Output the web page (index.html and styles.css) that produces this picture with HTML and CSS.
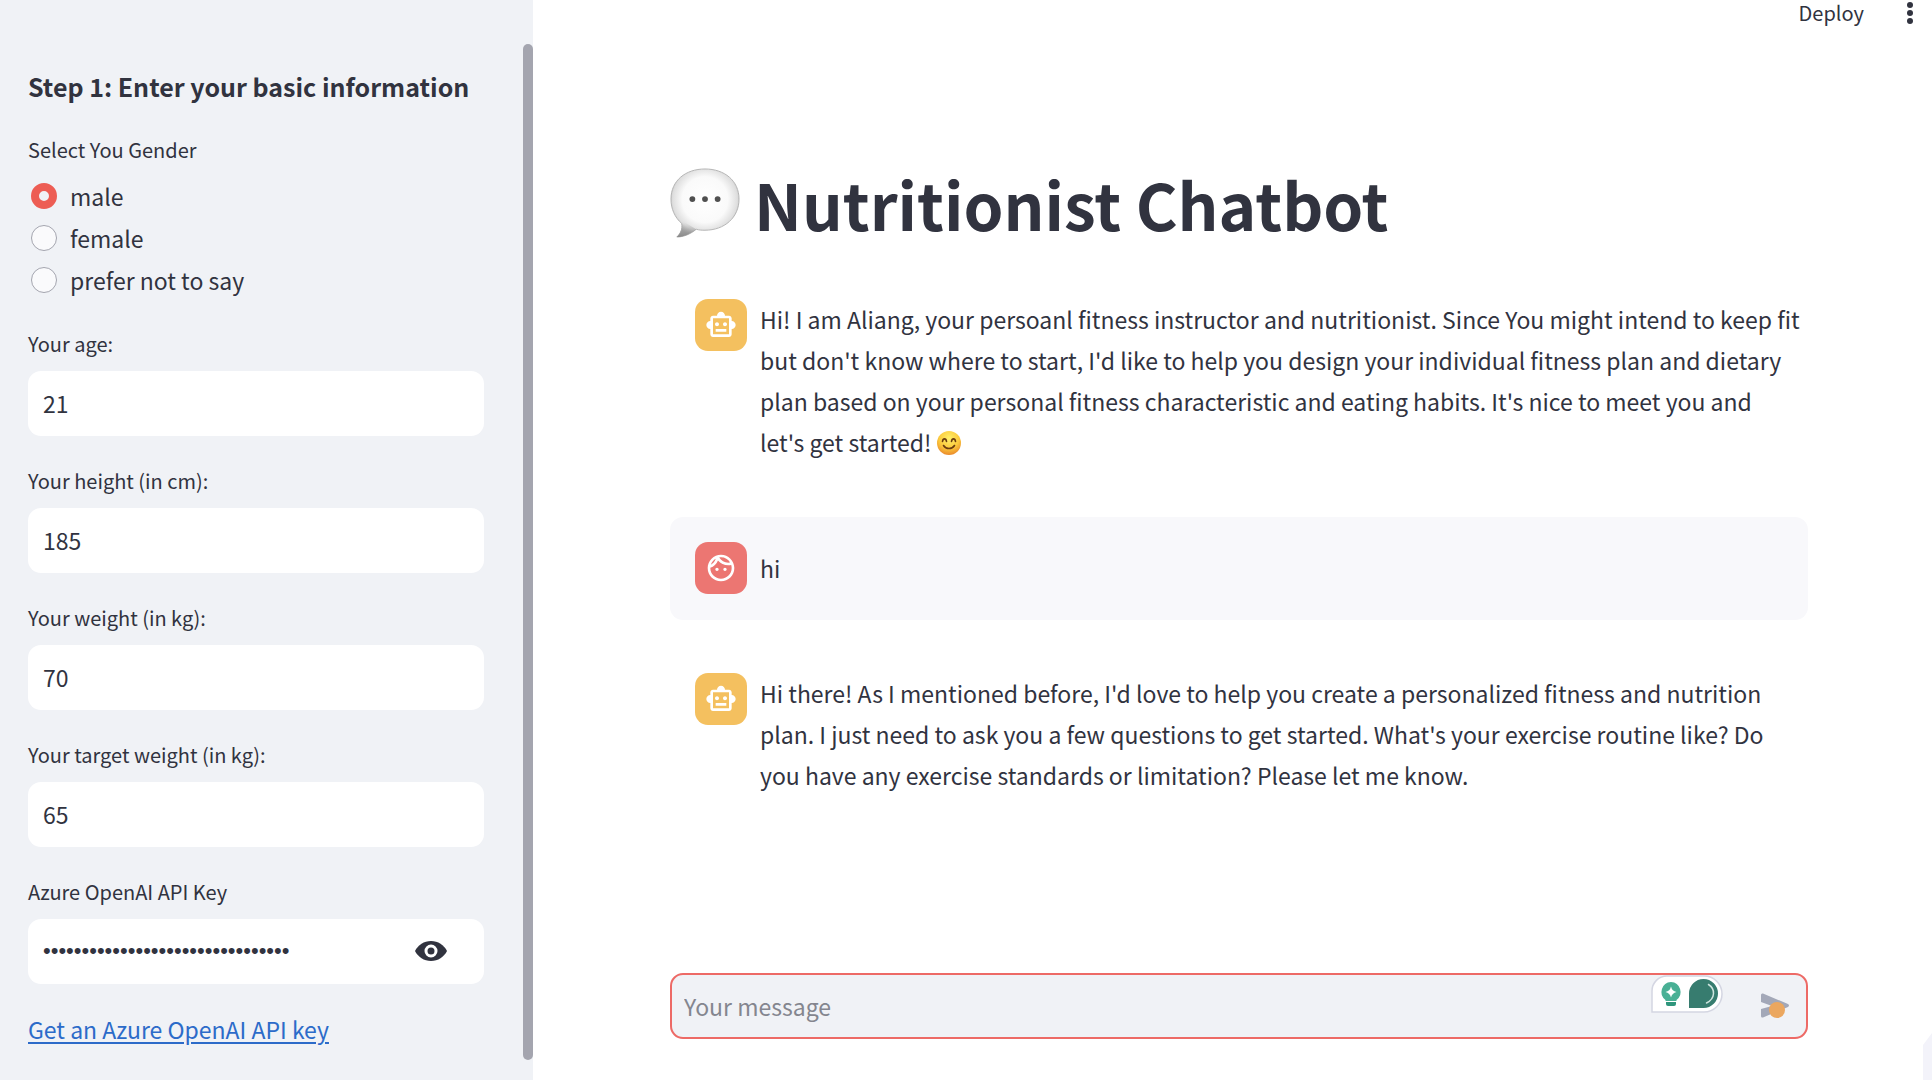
FILE: index.html
```html
<!DOCTYPE html>
<html lang="en">
<head>
<meta charset="utf-8">
<title>Nutritionist Chatbot</title>
<link rel="stylesheet" href="styles.css">
</head>
<body>
<svg class="defs" aria-hidden="true">
  <symbol id="robot" viewBox="0 0 24 24"><path d="M20 9V7c0-1.1-.9-2-2-2h-3c0-1.66-1.34-3-3-3S9 3.34 9 5H6c-1.1 0-2 .9-2 2v2c-1.66 0-3 1.34-3 3s1.34 3 3 3v4c0 1.1.9 2 2 2h12c1.1 0 2-.9 2-2v-4c1.66 0 3-1.34 3-3s-1.34-3-3-3zm-2 10H6V7h12v12zm-9-6c-.83 0-1.5-.67-1.5-1.5S8.17 10 9 10s1.5.67 1.5 1.5S9.83 13 9 13zm7.5-1.5c0 .83-.67 1.5-1.5 1.5s-1.5-.67-1.5-1.5.67-1.5 1.5-1.5 1.5.67 1.5 1.5zM8 15h8v2H8v-2z"/></symbol>
  <symbol id="face" viewBox="0 0 24 24"><path d="M10.25 13c0 .69-.56 1.25-1.25 1.25S7.75 13.69 7.75 13s.56-1.25 1.25-1.25 1.25.56 1.25 1.25zM15 11.75c-.69 0-1.25.56-1.25 1.25s.56 1.25 1.25 1.25 1.25-.56 1.25-1.25-.56-1.25-1.25-1.25zm7 .25c0 5.52-4.48 10-10 10S2 17.52 2 12 6.48 2 12 2s10 4.48 10 10zM10.66 4.12C12.06 6.44 14.6 8 17.5 8c.46 0 .91-.05 1.34-.12C17.44 5.56 14.9 4 12 4c-.46 0-.91.05-1.34.12zM4.42 9.47c1.71-.97 3.03-2.55 3.66-4.44C6.37 6 5.05 7.58 4.42 9.47zM20 12c0-.78-.12-1.53-.33-2.24-.7.15-1.42.24-2.17.24-3.13 0-5.92-1.44-7.76-3.69C8.69 8.87 6.6 10.88 4 11.86c.01.04 0 .09 0 .14 0 4.41 3.59 8 8 8s8-3.59 8-8z"/></symbol>
</svg>
<div class="app">
  <aside class="sidebar">
    <form class="profile">
      <h2 class="step">Step 1: Enter your basic information</h2>
      <fieldset class="gender">
        <legend class="label">Select You Gender</legend>
        <label class="option"><input type="radio" name="gender" checked>male</label>
        <label class="option"><input type="radio" name="gender">female</label>
        <label class="option"><input type="radio" name="gender">prefer not to say</label>
      </fieldset>
      <div class="field">
        <label class="label" for="age">Your age:</label>
        <input class="box" id="age" type="text" inputmode="numeric" value="21">
      </div>
      <div class="field">
        <label class="label" for="height">Your height (in cm):</label>
        <input class="box" id="height" type="text" inputmode="numeric" value="185">
      </div>
      <div class="field">
        <label class="label" for="weight">Your weight (in kg):</label>
        <input class="box" id="weight" type="text" inputmode="numeric" value="70">
      </div>
      <div class="field">
        <label class="label" for="target">Your target weight (in kg):</label>
        <input class="box" id="target" type="text" inputmode="numeric" value="65">
      </div>
      <div class="field">
        <label class="label" for="key">Azure OpenAI API Key</label>
        <div class="box secret">
          <input class="secret-input" id="key" type="password" value="0123456789abcdef0123456789abcdef">
          <button class="reveal" type="button" aria-label="Show password">
            <svg viewBox="0 0 32 20" width="32" height="20"><path fill="#31333f" d="M0 10C3 4 9 0 16 0s13 4 16 10c-3 6-9 10-16 10S3 16 0 10z"/><circle cx="16" cy="10" r="5" fill="#31333f" stroke="#fff" stroke-width="3"/></svg>
          </button>
        </div>
      </div>
      <a class="key-link" href="#">Get an Azure OpenAI API key</a>
    </form>
    <div class="scrollbar"></div>
  </aside>

  <main class="main">
    <header class="toolbar">
      <button class="deploy" type="button">Deploy</button>
      <button class="menu" type="button" aria-label="Menu">
        <svg viewBox="0 0 6 24" width="6" height="24" fill="#31333f"><circle cx="3" cy="4" r="3"/><circle cx="3" cy="12" r="3"/><circle cx="3" cy="20" r="3"/></svg>
      </button>
    </header>

    <h1 class="title">
      <svg class="bubble" viewBox="0 0 72 72" width="70" height="70" role="img" aria-label="Speech balloon">
        <defs>
          <radialGradient id="shade" cx=".5" cy=".45" r=".56"><stop offset="0" stop-color="#fff"/><stop offset=".6" stop-color="#fafafa"/><stop offset=".85" stop-color="#dedede"/><stop offset="1" stop-color="#a8a8a8"/></radialGradient>
          <linearGradient id="tail" x1="0" y1="0" x2="0" y2="1"><stop offset=".1" stop-color="#aaa" stop-opacity="0"/><stop offset="1" stop-color="#888"/></linearGradient>
        </defs>
        <path fill="url(#shade)" stroke="#b4b4b4" d="M36 1C56 1 71 13 71 32S56 64 36 64c-3 0-6 0-9-1-6 5-13 8-20 8 4-4 6-8 5-14C5 51 1 42 1 32 1 13 16 1 36 1z"/>
        <path fill="url(#tail)" d="M12 54l15 9c-6 5-13 8-20 8 4-4 6-9 5-17z"/>
        <g fill="#505050"><circle cx="23" cy="32" r="3"/><circle cx="36" cy="32" r="3"/><circle cx="49" cy="32" r="3"/></g>
      </svg>
      Nutritionist Chatbot
    </h1>

    <section class="chat">
      <article class="message">
        <span class="avatar bot"><svg width="32" height="32"><use href="#robot"/></svg></span>
        <p class="text">Hi! I am Aliang, your persoanl fitness instructor and nutritionist. Since You might intend to keep fit but don't know where to start, I'd like to help you design your individual fitness plan and dietary plan based on your personal fitness characteristic and eating habits. It's nice to meet you and let's&nbsp;get started!
          <svg class="smile" viewBox="0 0 24 24" width="24" height="24" role="img" aria-label="Smiling face">
            <defs><radialGradient id="skin" cx=".5" cy=".3" r=".7"><stop offset="0" stop-color="#fff06a"/><stop offset=".6" stop-color="#fbc93c"/><stop offset="1" stop-color="#ea8a2c"/></radialGradient></defs>
            <circle cx="12" cy="12" r="12" fill="url(#skin)"/>
            <g fill="none" stroke="#6b3c10" stroke-width="1.6" stroke-linecap="round"><path d="M5.500 10.500c.5-3.500 3.500-3.500 4 0M14.500 10.500c.5-3.500 3.500-3.500 4 0M6.500 14.500c2.500 4 8.500 4 11 0"/></g>
          </svg></p>
      </article>
      <article class="message from-user">
        <span class="avatar user"><svg width="32" height="32"><use href="#face"/></svg></span>
        <p class="text">hi</p>
      </article>
      <article class="message">
        <span class="avatar bot"><svg width="32" height="32"><use href="#robot"/></svg></span>
        <p class="text">Hi there! As I mentioned before, I'd love to help you create a personalized fitness and nutrition plan. I just need to ask you a few questions to get started. What's your exercise routine like? Do you have any exercise standards or limitation? Please let me know.</p>
      </article>
    </section>

    <form class="composer">
      <input class="composer-input" type="text" placeholder="Your message" aria-label="Your message">
      <div class="assistant">
        <svg viewBox="0 0 72 38" width="72" height="38" aria-hidden="true">
          <path fill="#fff" stroke="#d4d6e2" stroke-width="1.500" d="M1 37V16A15 15 0 0 1 16 1h37a18 18 0 0 1 0 36z"/>
          <path fill="#49b095" d="M20 7a10 10 0 0 1 5.500 18v1h-11v-1A10 10 0 0 1 20 7z"/>
          <path fill="#2f957c" d="M15 27h10v2q0 2-2 2h-6q-2 0-2-2z"/>
          <path fill="#fff" d="M20 11.500q1 4.500 5.500 5.500-4.500 1-5.500 5.500-1-4.500-5.500-5.500 4.500-1 5.500-5.500z"/>
          <path fill="#377c6f" d="M38 33V18.500A14.500 14.500 0 1 1 52.500 33z"/>
          <path fill="none" stroke="#cfe5df" stroke-width="1.500" stroke-linecap="round" d="M57.500 9.500c7 4.500 7 14-2 18.500"/>
        </svg>
      </div>
      <button class="send" type="submit" aria-label="Send">
        <svg viewBox="0 0 28 26" width="28" height="26"><path fill="#a3a8b8" d="M0 2Q0 0 2 .5L27 11q2 1.500 0 3L2 24.500Q0 25 0 23v-7l11-3L0 9z"/><circle cx="16" cy="17" r="8" fill="#eba75f"/></svg>
      </button>
    </form>
    <div class="corner"></div>
  </main>
</div>
</body>
</html>
```
FILE: styles.css
```css
* { box-sizing: border-box; }

body {
  margin: 0;
  background: #fff;
  color: #31333f;
  font-family: "Noto Sans CJK SC", "Noto Sans", sans-serif;
  font-size: 23px;
  line-height: 41px;
}

button, input { font: inherit; color: inherit; }
button { border: 0; padding: 0; background: none; cursor: pointer; }
svg { display: block; flex: none; }
.defs { position: absolute; width: 0; height: 0; }

.app { display: flex; min-height: 100vh; }

/* Sidebar */
.sidebar {
  position: relative;
  flex: none;
  width: 533px;
  padding: 63px 49px 0 28px;
  background: #f0f2f6;
}
.scrollbar {
  position: absolute;
  top: 44px;
  right: 0;
  bottom: 20px;
  width: 10px;
  border-radius: 5px;
  background: #a4a5af;
}
.profile { display: flex; flex-direction: column; }
.step { margin: 0 0 25px; font-size: 25px; font-weight: 700; line-height: 46px; }
.label { display: block; padding: 0; font-size: 20px; line-height: 32px; }
.gender { margin: 0 0 27px; padding: 0; border: 0; }
.gender .label { margin-bottom: 9px; }
.option { display: flex; align-items: center; gap: 13px; height: 42px; padding-left: 3px; }
.option input {
  appearance: none;
  width: 26px;
  height: 26px;
  margin: 0;
  border: 1px solid #a4a5af;
  border-radius: 50%;
  background: #fafafc;
}
.option input:checked { border: 8px solid #ed5d54; background: #f0f2f6; }

.field { margin-bottom: 29px; }
.field .label { margin-bottom: 11px; }
.box {
  display: block;
  width: 100%;
  height: 65px;
  padding: 0 15px 2px;
  border: 0;
  border-radius: 13px;
  background: #fff;
}
.secret { display: flex; align-items: center; padding-right: 37px; }
.secret-input {
  flex: 1;
  min-width: 0;
  padding: 0;
  border: 0;
  background: none;
  font-family: "Liberation Sans", sans-serif;
  font-size: 22px;
}
.key-link { color: #2c6bc9; line-height: 32px; text-underline-offset: 3px; }

/* Main column */
.main {
  position: relative;
  flex: 1;
  min-width: 0;
  display: flex;
  flex-direction: column;
  padding: 0 124px 41px 137px;
}
.toolbar {
  display: flex;
  justify-content: flex-end;
  align-items: center;
  gap: 43px;
  height: 26px;
  margin-right: -105px;
}
.deploy { font-size: 20px; line-height: 26px; }
.title {
  display: flex;
  align-items: center;
  gap: 14px;
  margin: 136px 0 30px;
  font-size: 64px;
  font-weight: 700;
  line-height: 82px;
}
.chat { display: flex; flex-direction: column; gap: 28px; }
.message { display: flex; gap: 13px; padding: 25px 0 26px 25px; border-radius: 13px; }
.from-user { align-items: center; background: #f8f8fb; }
.avatar {
  display: grid;
  place-items: center;
  flex: none;
  width: 52px;
  height: 52px;
  border-radius: 13px;
}
.avatar svg { fill: #fff; }
.bot { background: #f4c05f; }
.user { background: #ec7672; }
.text { margin: 0; }
.smile { display: inline-block; vertical-align: -3px; }

.composer {
  position: relative;
  display: flex;
  align-items: center;
  height: 66px;
  margin-top: auto;
  padding: 0 17px 0 12px;
  border: 2px solid #ed6a66;
  border-radius: 13px;
  background: #f0f2f6;
}
.composer-input { flex: 1; min-width: 0; padding: 0; border: 0; background: none; outline: 0; }
.composer-input::placeholder { color: #84868f; opacity: 1; }
.assistant { position: absolute; top: 0; right: 83px; }
.corner {
  position: absolute;
  right: 0;
  bottom: 0;
  width: 9px;
  height: 47px;
  background: #f3f3fa;
  clip-path: polygon(0 12px, 100% 0, 100% 100%, 0 100%);
}
```
